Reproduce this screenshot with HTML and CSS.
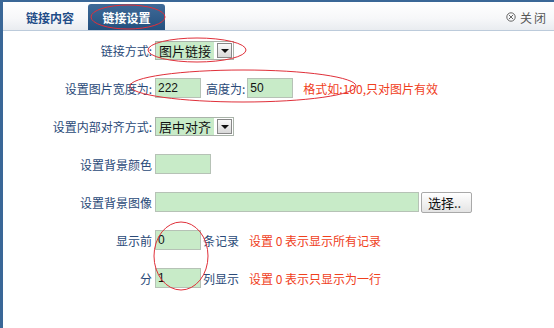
FILE: index.html
```html
<!DOCTYPE html>
<html lang="zh-CN">
<head>
    <meta charset="UTF-8">
    <title>链接设置</title>
    <link rel="stylesheet" href="styles.css">
</head>
<body>
    <div class="panel">
        <!-- tab bar -->
        <div class="tabbar">
            <span class="tab">链接内容</span>
            <span class="tab active">链接设置</span>
            <span class="close">
                <svg width="10" height="10" viewBox="0 0 10 10"><circle cx="5" cy="5" r="4.2" fill="none" stroke="#666" stroke-width="1"/><path d="M3 3L7 7M7 3L3 7" stroke="#666" stroke-width="1"/></svg>
                关闭
            </span>
        </div>

        <!-- settings form -->
        <div class="form">
            <div class="row">
                <span class="label">链接方式:</span>
                <span class="select"><span class="select-text">图片链接</span><span class="select-btn"><i></i></span></span>
            </div>
            <div class="row">
                <span class="label">设置图片宽度为:</span>
                <span class="input small">222</span>
                <span class="text gap-l">高度为:</span>
                <span class="input small">50</span>
                <span class="hint">格式如:100,只对图片有效</span>
            </div>
            <div class="row">
                <span class="label">设置内部对齐方式:</span>
                <span class="select"><span class="select-text">居中对齐</span><span class="select-btn"><i></i></span></span>
            </div>
            <div class="row">
                <span class="label">设置背景颜色</span>
                <span class="input color"></span>
            </div>
            <div class="row">
                <span class="label">设置背景图像</span>
                <span class="input wide"></span>
                <span class="button">选择..</span>
            </div>
            <div class="row">
                <span class="label">显示前</span>
                <span class="input small">0</span>
                <span class="text">条记录</span>
                <span class="hint">设置 0 表示显示所有记录</span>
            </div>
            <div class="row">
                <span class="label">分</span>
                <span class="input small">1</span>
                <span class="text">列显示</span>
                <span class="hint">设置 0 表示只显示为一行</span>
            </div>
        </div>

        <!-- red annotation marks -->
        <svg class="marks" width="554" height="328" viewBox="0 0 554 328">
            <ellipse cx="128" cy="17" rx="37" ry="12" />
            <ellipse cx="197" cy="50" rx="49" ry="12" />
            <ellipse cx="243" cy="86" rx="113" ry="16" />
            <ellipse cx="181" cy="256" rx="27" ry="34" />
        </svg>
    </div>
</body>
</html>
```

FILE: styles.css
```css
body {
    margin: 0;
    font-family: "Noto Sans CJK SC", "Liberation Sans", sans-serif;
    font-size: 12px;
    background: #fff;
}

.panel {
    position: relative;
    width: 551px;
    height: 326px;
    border-top: 2px solid #3a6797;
    border-left: 3px solid #3a6797;
    overflow: hidden;
}

.tabbar {
    display: flex;
    align-items: flex-end;
    height: 28px;
    padding-left: 23px;
    background: linear-gradient(#ffffff, #f6f7f9 60%, #e9ecf0);
    border-bottom: 1px solid #bccbdb;
}

.tab {
    display: flex;
    align-items: center;
    justify-content: center;
    height: 26px;
    font-weight: bold;
    color: #1f4d88;
    margin-right: 14px;
    letter-spacing: 0;
}

.tab.active {
    width: 77px;
    margin-left: 0;
    color: #fff;
    background: linear-gradient(#3f6a98, #24507e);
    border-radius: 3px 3px 0 0;
}

.close {
    margin-left: auto;
    margin-right: 6px;
    height: 26px;
    display: flex;
    align-items: center;
    gap: 4px;
    color: #555;
    letter-spacing: 2px;
}

.form {
    display: flex;
    flex-direction: column;
}

.row {
    display: flex;
    align-items: center;
    height: 38px;
    color: #2a4a78;
}

.label {
    width: 149px;
    text-align: right;
    margin-right: 3px;
}

.input {
    box-sizing: border-box;
    height: 20px;
    line-height: 18px;
    padding-left: 2px;
    background: #c8ebc8;
    border: 1px solid #b6c2b6;
    color: #111;
    font-family: "Liberation Sans", sans-serif;
}

.input.small {
    width: 46px;
}

.input.color {
    width: 56px;
}

.input.wide {
    width: 264px;
}

.text {
    margin-left: 2px;
}

.text.gap-l {
    margin-left: 5px;
    margin-right: 2px;
}

.hint {
    margin-left: 10px;
    color: #f0401c;
}

.select {
    display: flex;
    align-items: center;
    box-sizing: border-box;
    height: 19px;
    border: 1px solid #aab4aa;
    background: #fff;
}

.select-text {
    height: 17px;
    line-height: 17px;
    padding: 0 3px;
    background: #c8ebc8;
    color: #111;
    font-size: 13px;
}

.select-btn {
    position: relative;
    box-sizing: border-box;
    width: 15px;
    height: 15px;
    margin: 0 1px 0 3px;
    border: 1px solid #888;
    background: linear-gradient(#fafafa, #d8d8d8);
}

.select-btn i {
    position: absolute;
    left: 3px;
    top: 5px;
    border-left: 4px solid transparent;
    border-right: 4px solid transparent;
    border-top: 4px solid #111;
}

.button {
    box-sizing: border-box;
    height: 21px;
    line-height: 19px;
    margin-left: 2px;
    padding: 0 10px 0 6px;
    border: 1px solid #a9a9a9;
    border-radius: 2px;
    background: linear-gradient(#ffffff, #e4e4e4);
    color: #111;
    font-size: 13px;
}

.marks {
    position: absolute;
    left: -3px;
    top: -2px;
    pointer-events: none;
}

.marks ellipse {
    fill: none;
    stroke: #e0303a;
    stroke-width: 1;
}
```
